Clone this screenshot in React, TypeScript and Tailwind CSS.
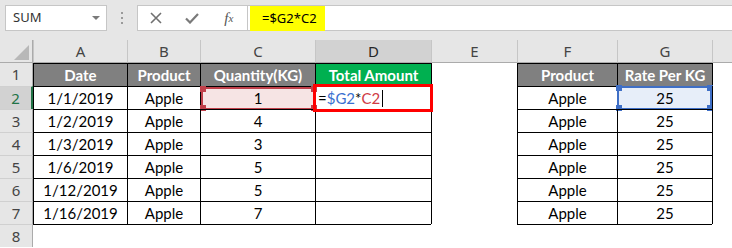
import React from 'react';

const widths = ['w-[94px]', 'w-[73px]', 'w-[115px]', 'w-[116px]', 'w-[86px]', 'w-[100px]', 'w-[95px]'];
const letters = ['A', 'B', 'C', 'D', 'E', 'F', 'G'];

const data = [
  ['Date', 'Product', 'Quantity(KG)', 'Total Amount', '', 'Product', 'Rate Per KG'],
  ['1/1/2019', 'Apple', '1', '', '', 'Apple', '25'],
  ['1/2/2019', 'Apple', '4', '', '', 'Apple', '25'],
  ['1/3/2019', 'Apple', '3', '', '', 'Apple', '25'],
  ['1/6/2019', 'Apple', '5', '', '', 'Apple', '25'],
  ['1/12/2019', 'Apple', '5', '', '', 'Apple', '25'],
  ['1/16/2019', 'Apple', '7', '', '', 'Apple', '25'],
];

const tableCol = (c: number) => c !== 4 && c !== 7;

const Handles: React.FC<{ color: string }> = ({ color }) => (
  <>
    <span className={`absolute -left-[3px] -top-[3px] w-[6px] h-[6px] ${color}`} />
    <span className={`absolute -right-[3px] -top-[3px] w-[6px] h-[6px] ${color}`} />
    <span className={`absolute -left-[3px] -bottom-[3px] w-[6px] h-[6px] ${color}`} />
    <span className={`absolute -right-[3px] -bottom-[3px] w-[6px] h-[6px] ${color}`} />
  </>
);

const Cell: React.FC<{ r: number; c: number }> = ({ r, c }) => {
  const text = r <= 7 ? data[r - 1][c] ?? '' : '';
  const isHead = r === 1 && tableCol(c);
  const cls = [
    c === 7 ? 'flex-1' : `${widths[c]} shrink-0`,
    'relative flex items-center justify-center text-[15px]',
    r <= 7 ? 'border-l border-black' : '',
    tableCol(c) ? 'border-t border-black' : '',
    isHead ? (c === 3 ? 'bg-[#00b050] text-white font-bold' : 'bg-[#808080] text-white font-bold') : 'text-black',
    r === 2 && c === 2 ? 'bg-[#f6e4e4]' : '',
    r === 2 && c === 6 ? 'bg-[#e7eef9]' : '',
    r === 2 && c === 3 ? 'justify-start pl-[2px] z-10' : '',
  ].join(' ');

  return (
    <div className={cls}>
      {text}
      {r === 2 && c === 2 && (
        <div className="absolute left-0 top-0 -right-px -bottom-px border-2 border-[#c0404a]">
          <Handles color="bg-[#c0404a]" />
        </div>
      )}
      {r === 2 && c === 6 && (
        <div className="absolute -left-px -top-px right-0 -bottom-px border-2 border-[#3f6fc6]">
          <Handles color="bg-[#3f6fc6]" />
        </div>
      )}
      {r === 2 && c === 3 && (
        <>
          <span className="text-black">=</span>
          <span className="text-[#3a6fd0]">$G2</span>
          <span className="text-black">*</span>
          <span className="text-[#cf3b45]">C2</span>
          <span className="ml-[2px] w-px h-[17px] bg-black" />
          <div className="absolute -left-[3px] -top-[3px] -right-[2px] -bottom-[3px] border-[3px] border-[#ff0000]" />
        </>
      )}
    </div>
  );
};

const App: React.FC = () => {
  return (
    <div className="w-[732px] h-[248px] overflow-hidden bg-white font-['Lato',sans-serif]">
      {/* formula bar */}
      <div className="h-[40px] bg-[#e6e6e6] flex pt-[5px] pl-[5px]">
        <div className="w-[102px] h-[26px] shrink-0 bg-white border border-[#c6c6c6] flex items-center justify-between pl-[7px] pr-[6px]">
          <span className="font-['Noto_Sans',sans-serif] text-[13px] text-[#333]">SUM</span>
          <svg width="8" height="4" viewBox="0 0 8 4">
            <path d="M0 0h8L4 4z" fill="#7a7a7a" />
          </svg>
        </div>
        <div className="w-[30px] h-[26px] shrink-0 flex flex-col items-center justify-center gap-[3px]">
          <span className="w-[2px] h-[2px] bg-[#9a9a9a]" />
          <span className="w-[2px] h-[2px] bg-[#9a9a9a]" />
          <span className="w-[2px] h-[2px] bg-[#9a9a9a]" />
        </div>
        <div className="w-[111px] h-[26px] shrink-0 bg-white border border-[#c6c6c6] flex items-center">
          <div className="w-[37px] flex justify-center">
            <svg width="12" height="12" viewBox="0 0 12 12">
              <path d="M1 1l10 10M11 1L1 11" stroke="#707070" strokeWidth="1.6" />
            </svg>
          </div>
          <div className="w-[37px] flex justify-center">
            <svg width="14" height="11" viewBox="0 0 14 11">
              <path d="M1 5.5l4 4L13 1" stroke="#7a7a7a" strokeWidth="2.2" fill="none" />
            </svg>
          </div>
          <div className="w-[37px] flex justify-center font-['Liberation_Serif',serif] italic text-[15px] text-[#555]">
            f<span className="text-[11px] mt-[3px]">x</span>
          </div>
        </div>
        <div className="flex-1 h-[26px] bg-white border-y border-[#c6c6c6] flex">
          <div className="ml-[2px] w-[75px] h-[25px] bg-[#ffff00] pl-[12px] flex items-center font-['Noto_Sans',sans-serif] text-[13px] text-black">
            =$G2*C2
          </div>
        </div>
      </div>

      {/* column headers */}
      <div className="flex h-[23px] bg-[#e6e6e6] font-['Noto_Sans',sans-serif] text-[15px] text-[#444]">
        <div className="w-[33px] shrink-0 border-r border-b border-[#ababab] flex items-end justify-end pr-[3px] pb-[2px]">
          <svg width="15" height="15" viewBox="0 0 15 15">
            <path d="M0 15H15V0z" fill="#b8b8b8" />
          </svg>
        </div>
        {letters.map((l, i) => (
          <div
            key={l}
            className={`${widths[i]} shrink-0 border-l border-b border-[#c6c6c6] border-b-[#ababab] flex items-center justify-center ${i === 3 ? 'bg-[#d2d2d2] text-[#262626]' : ''}`}
          >
            {l}
          </div>
        ))}
        <div className="flex-1 border-l border-b border-[#c6c6c6] border-b-[#ababab]" />
      </div>

      {/* rows */}
      {[1, 2, 3, 4, 5, 6, 7, 8].map((r) => (
        <div key={r} className="flex h-[23px]">
          <div
            className={`w-[33px] shrink-0 flex items-center justify-center font-['Noto_Sans',sans-serif] text-[15px] ${
              r > 1 ? 'border-t border-t-[#d0d0d0]' : ''
            } ${r === 2 ? 'bg-[#d2d2d2] text-[#217346] border-r-2 border-r-[#217346]' : 'bg-[#e6e6e6] text-[#444] border-r border-r-[#ababab]'}`}
          >
            {r}
          </div>
          {[0, 1, 2, 3, 4, 5, 6, 7].map((c) => (
            <Cell key={c} r={r} c={c} />
          ))}
        </div>
      ))}
    </div>
  );
};

export default App;
